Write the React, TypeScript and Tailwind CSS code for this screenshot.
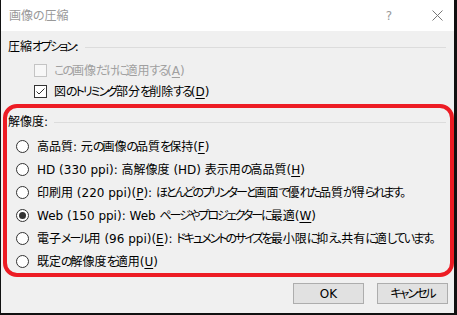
import React from 'react';

// kana and CJK punctuation are narrower in the original UI font
const KANA = /([\u3001-\u303f\u3040-\u30ff]+)/;

const jp = (text: string) =>
  text.split(KANA).map((part, i) =>
    i % 2 === 1 ? (
      <span key={i} className="tracking-[-2px]">
        {part}
      </span>
    ) : (
      <React.Fragment key={i}>{part}</React.Fragment>
    )
  );

const Label: React.FC<{ pre: string; k: string; post?: string }> = ({ pre, k, post }) => (
  <span>
    {jp(pre)}(<span className="underline underline-offset-2">{k}</span>){post && jp(post)}
  </span>
);

type Option = { pre: string; k: string; post?: string; checked?: boolean };

const options: Option[] = [
  { pre: '高品質: 元の画像の品質を保持', k: 'F' },
  { pre: 'HD (330 ppi): 高解像度 (HD) 表示用の高品質', k: 'H' },
  { pre: '印刷用 (220 ppi)', k: 'P', post: ': ほとんどのプリンターと画面で優れた品質が得られます。' },
  { pre: 'Web (150 ppi): Web ページやプロジェクターに最適', k: 'W', checked: true },
  { pre: '電子メール用 (96 ppi)', k: 'E', post: ': ドキュメントのサイズを最小限に抑え、共有に適しています。' },
  { pre: '既定の解像度を適用', k: 'U' },
];

const Radio: React.FC<{ checked?: boolean }> = ({ checked }) => (
  <span className="w-[13px] h-[13px] rounded-full border border-[#333333] bg-white flex items-center justify-center shrink-0">
    {checked && <span className="w-[7px] h-[7px] rounded-full bg-[#333333]" />}
  </span>
);

const GroupHeader: React.FC<{ title: string }> = ({ title }) => (
  <div className="flex items-center h-[18px] pr-[8px]">
    <span className="whitespace-nowrap">{jp(title)}</span>
    <div className="flex-1 ml-[6px] h-px bg-[#dcdcdc]" />
  </div>
);

const App: React.FC = () => {
  return (
    <div className="relative w-[457px] h-[315px] bg-[#f0f0f0] border-l border-r-[3px] border-b-2 border-[#111111] text-[12px] leading-none text-black font-['DejaVu_Sans','Noto_Sans_CJK_JP',sans-serif] [font-feature-settings:'palt'] overflow-hidden">
      {/* Title bar */}
      <div className="h-[31px] bg-white flex items-center pl-[8px] pr-[9px] text-[#999999]">
        <span className="flex-1">画像の圧縮</span>
        <span className="w-[10px] text-center mr-[38px] text-[12px]">?</span>
        <svg width="11" height="11" viewBox="0 0 11 11" className="mr-[2px]">
          <path d="M0.5 0.5 L10.5 10.5 M10.5 0.5 L0.5 10.5" stroke="#777777" strokeWidth="1" />
        </svg>
      </div>

      <div className="flex flex-col pl-[7px]">
        {/* Compression options */}
        <div className="mt-[7px]">
          <GroupHeader title="圧縮オプション:" />
        </div>
        <div className="flex items-center h-[21px] mt-[4px] pl-[26px] gap-[7px] text-[#a0a0a0]">
          <span className="w-[13px] h-[13px] border border-[#c4c4c4] bg-[#f7f7f7] shrink-0" />
          <Label pre="この画像だけに適用する" k="A" />
        </div>
        <div className="flex items-center h-[21px] pl-[26px] gap-[7px]">
          <span className="w-[13px] h-[13px] border border-[#333333] bg-white shrink-0 flex items-center justify-center">
            <svg width="11" height="11" viewBox="0 0 11 11">
              <path d="M1.5 5.5 L4 8 L9.5 2.5" fill="none" stroke="#333333" strokeWidth="1" />
            </svg>
          </span>
          <Label pre="図のトリミング部分を削除する" k="D" />
        </div>

        {/* Resolution */}
        <div className="mt-[11px]">
          <GroupHeader title="解像度:" />
        </div>
        <div className="flex flex-col mt-[4px] pl-[8px]">
          {options.map((o, i) => (
            <div key={i} className="flex items-center h-[23px] gap-[8px] whitespace-nowrap">
              <Radio checked={o.checked} />
              <Label pre={o.pre} k={o.k} post={o.post} />
            </div>
          ))}
        </div>

        {/* Buttons */}
        <div className="flex justify-end gap-[13px] mt-[10px] pr-[6px]">
          <button className="w-[71px] h-[21px] bg-[#e1e1e1] border border-[#adadad] text-black">OK</button>
          <button className="w-[71px] h-[21px] bg-[#e1e1e1] border border-[#adadad] text-black">{jp('キャンセル')}</button>
        </div>
      </div>

      {/* Red annotation */}
      <div className="absolute left-[2px] top-[104px] w-[451px] h-[173px] border-[4px] border-[#ed1c24] rounded-[14px] pointer-events-none" />
    </div>
  );
};

export default App;
